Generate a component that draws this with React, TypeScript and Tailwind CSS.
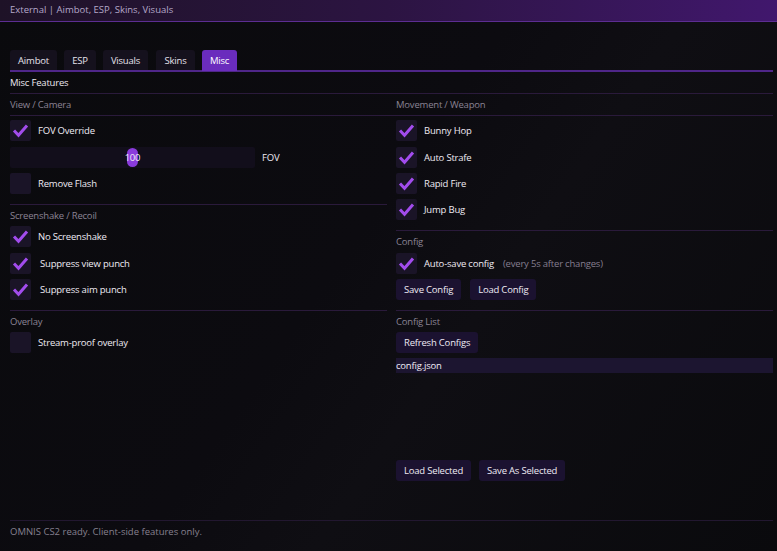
import React from 'react';

const font = "font-['Open_Sans',sans-serif] text-[9.5px] font-medium tracking-[-0.2px]";

function Check({ on }: { on: boolean }) {
  return (
    <div className="w-[21px] h-[21px] shrink-0 rounded-[2px] bg-[#1a1427] flex items-center justify-center">
      {on && (
        <svg width="21" height="21" viewBox="0 0 21 21">
          <path d="M4 10.5 L8.5 15.2 L17 5.5" fill="none" stroke="#a24ced" strokeWidth="3" strokeLinejoin="miter" />
        </svg>
      )}
    </div>
  );
}

function CheckRow({
  label,
  on,
  className = '',
  extra,
  indent = false,
}: {
  label: string;
  on: boolean;
  className?: string;
  extra?: string;
  indent?: boolean;
}) {
  return (
    <div className={`flex items-center h-[21px] ${className}`}>
      <Check on={on} />
      <span className={`${indent ? 'ml-[9px]' : 'ml-[7px]'} pt-[2px] text-[#eeeaf3]`}>{label}</span>
      {extra && <span className="ml-[9px] pt-[2px] font-normal text-[#857e90]">{extra}</span>}
    </div>
  );
}

function Btn({ children }: { children: React.ReactNode }) {
  return (
    <div className="h-[21px] px-[8px] pt-[2px] rounded-[3px] bg-[#1b1230] text-[#eeeaf3] flex items-center">
      {children}
    </div>
  );
}

function Header({ children }: { children: React.ReactNode }) {
  return <div className="h-[21px] pt-[2px] flex items-center font-normal text-[#8a8394]">{children}</div>;
}

function Sep({ className = '' }: { className?: string }) {
  return <div className={`h-px bg-[#2a1a3b] ${className}`} />;
}

const tabs = [
  { name: 'Aimbot', cls: 'w-[47px]' },
  { name: 'ESP', cls: 'w-[32px] ml-[7px]' },
  { name: 'Visuals', cls: 'w-[45px] ml-[7px]' },
  { name: 'Skins', cls: 'w-[39px] ml-[8px]' },
  { name: 'Misc', cls: 'w-[35px] ml-[7px]' },
];

export default function App() {
  return (
    <div
      className={`w-[777px] h-[551px] overflow-hidden flex flex-col bg-[linear-gradient(125deg,#0a0a0d_0%,#0c0b10_45%,#0f0e13_60%,#0a0a0d_100%)] ${font}`}
    >
      {/* title bar */}
      <div className="h-[22px] shrink-0 border-b border-[#5c2d92] bg-gradient-to-r from-[#1e1227] via-[#2c1442] to-[#41176d] flex items-center pl-[10px] font-normal tracking-normal text-[#b4a8c9]">
        External | Aimbot, ESP, Skins, Visuals
      </div>

      <div className="flex-1 flex flex-col ml-[10px] w-[763px]">
        {/* tabs */}
        <div className="mt-[28px] flex border-b-2 border-[#4f2689] h-[22px]">
          {tabs.map((t) => (
            <div
              key={t.name}
              className={`${t.cls} pt-[2px] rounded-t-[3px] flex items-center justify-center ${
                t.name === 'Misc' ? 'bg-[#6a2cbd] text-white h-[21px]' : 'bg-[#15111d] text-[#e6e1ec] h-[20px]'
              }`}
            >
              {t.name}
            </div>
          ))}
        </div>

        <div className="h-[21px] pt-[2px] flex items-center text-[#ebe7f0]">Misc Features</div>
        <Sep />
        <div className="flex">
          <div className="w-[377px]">
            <Header>View / Camera</Header>
          </div>
          <div className="ml-[9px] flex-1">
            <Header>Movement / Weapon</Header>
          </div>
        </div>
        <Sep className="bg-[#1f1629]" />

        <div className="flex">
          {/* left column */}
          <div className="w-[377px] flex flex-col">
            <CheckRow className="mt-[4px]" label="FOV Override" on />
            <div className="mt-[6px] flex items-center h-[21px]">
              <div className="relative w-[245px] h-[21px] bg-[#120e1b] rounded-[2px] flex items-center justify-center">
                <div className="absolute left-[117px] top-[1px] w-[11px] h-[19px] rounded-full bg-[#8a3bdc]" />
                <span className="relative pt-[2px] text-[#f1edf6]">100</span>
              </div>
              <span className="ml-[7px] pt-[2px] text-[#eeeaf3]">FOV</span>
            </div>
            <CheckRow className="mt-[5px]" label="Remove Flash" on={false} />
            <Sep className="mt-[10px]" />
            <Header>Screenshake / Recoil</Header>
            <CheckRow label="No Screenshake" on />
            <CheckRow className="mt-[6px]" label="Suppress view punch" on indent />
            <CheckRow className="mt-[5px]" label="Suppress aim punch" on indent />
            <Sep className="mt-[10px]" />
            <Header>Overlay</Header>
            <CheckRow label="Stream-proof overlay" on={false} />
          </div>

          {/* right column */}
          <div className="ml-[9px] flex-1 flex flex-col">
            <CheckRow className="mt-[4px]" label="Bunny Hop" on />
            <CheckRow className="mt-[6px]" label="Auto Strafe" on />
            <CheckRow className="mt-[5px]" label="Rapid Fire" on />
            <CheckRow className="mt-[5px]" label="Jump Bug" on />
            <Sep className="mt-[10px]" />
            <Header>Config</Header>
            <CheckRow className="mt-[1px]" label="Auto-save config" on extra="(every 5s after changes)" />
            <div className="mt-[5px] flex gap-[9px]">
              <Btn>Save Config</Btn>
              <Btn>Load Config</Btn>
            </div>
            <Sep className="mt-[10px]" />
            <Header>Config List</Header>
            <div className="flex">
              <Btn>Refresh Configs</Btn>
            </div>
            <div className="mt-[5px] h-[15px] pt-[1px] bg-[#1c1530] flex items-center text-[#f0ecf5]">config.json</div>
            <div className="mt-[87px] flex gap-[8px]">
              <Btn>Load Selected</Btn>
              <Btn>Save As Selected</Btn>
            </div>
          </div>
        </div>
        <div className="flex-1" />
      </div>

      {/* footer */}
      <div className="ml-[10px] w-[763px] h-[31px] shrink-0 border-t border-[#221730]">
        <div className="h-[21px] pt-[2px] flex items-center font-normal tracking-normal text-[#86808f]">
          OMNIS CS2 ready. Client-side features only.
        </div>
      </div>
    </div>
  );
}
